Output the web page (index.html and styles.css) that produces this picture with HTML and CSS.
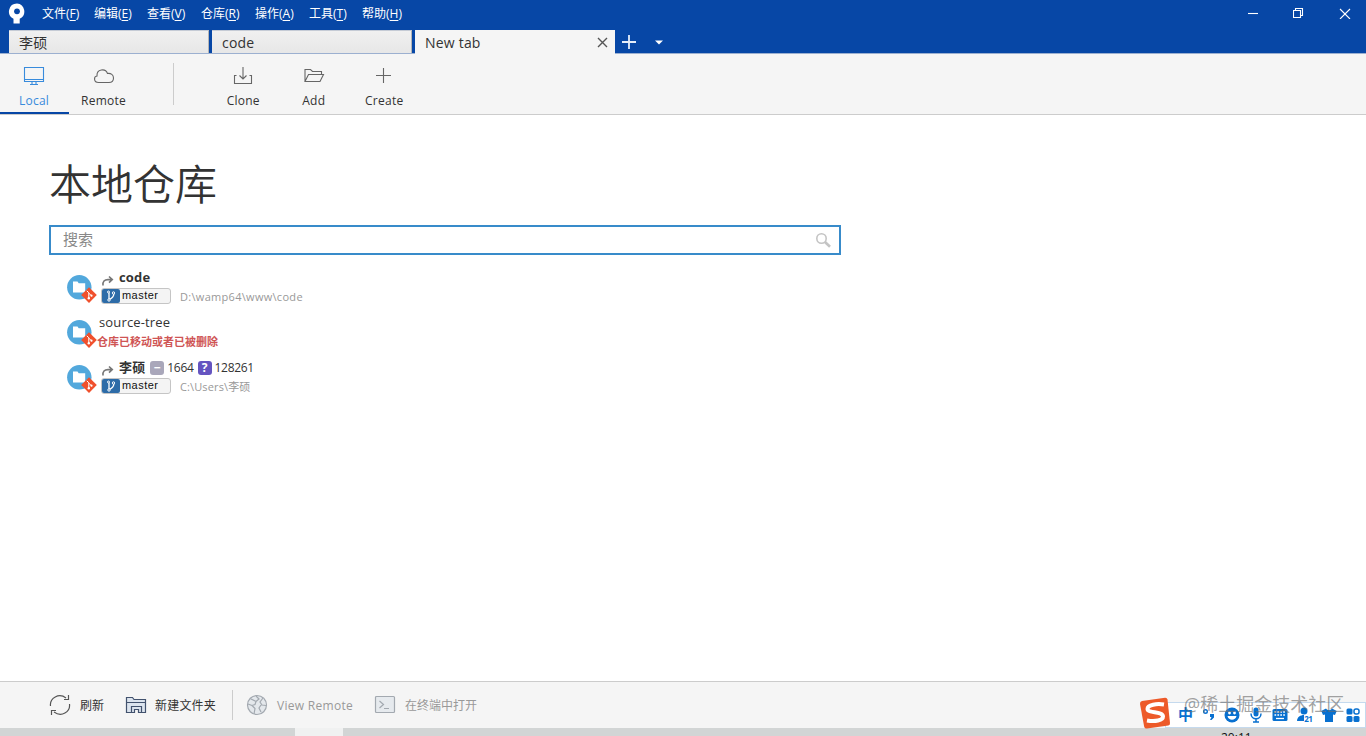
FILE: index.html
```html
<!DOCTYPE html>
<html lang="zh-CN">
<head>
<meta charset="utf-8">
<title>SourceTree</title>
<link rel="stylesheet" href="styles.css">
</head>
<body>
<svg class="defs" width="0" height="0">
  <defs>
    <symbol id="repo" viewBox="0 0 31 28">
      <circle cx="12.3" cy="12.3" r="12.2" fill="#52a8dc"/>
      <path d="M6 6.5h4.5l1.2 1.8h6.5v9.2H6z" fill="#fff"/>
      <path d="M22 12.300l7.800 7.800-7.800 7.800-7.800-7.800z" fill="#f0502c"/>
      <path d="M19.800 15.800l2 2v6M21.800 18.200l2.700 2.600" stroke="#fff" fill="none"/>
      <circle cx="21.800" cy="23.300" r="1.200" fill="#fff"/><circle cx="24.500" cy="20.700" r="1.100" fill="#fff"/>
    </symbol>
    <symbol id="arrow" viewBox="0 0 13 12">
      <path d="M2 10.500C1.500 6.500 3.500 4.600 7 4.600h4M8 1.500l3.300 3.100L8 7.700" fill="none" stroke="#777" stroke-width="1.600"/>
    </symbol>
    <symbol id="branch" viewBox="0 0 18 14">
      <path d="M7 3.500v7M11.800 5c0 3-1.300 4-4.800 5.700" fill="none" stroke="#fff" stroke-width="1.300"/>
      <g fill="#2d6ca8" stroke="#fff"><circle cx="6.500" cy="3" r="1"/><circle cx="11.500" cy="4" r="1.200"/><circle cx="7" cy="11" r="1.200"/></g>
    </symbol>
  </defs>
</svg>
<header class="titlebar">
  <div class="menubar">
    <svg class="logo" width="18" height="22" viewBox="0 0 18 22"><path d="M9 .5a8 8 0 0 0-3.500 15.200V20.500h6.200v-4.800A8 8 0 0 0 9 .5z" fill="#fff"/><circle cx="9" cy="8.300" r="2.900" fill="#0747a6"/></svg>
    <nav class="menu">
      <span>文件(<u>F</u>)</span><span>编辑(<u>E</u>)</span><span>查看(<u>V</u>)</span><span>仓库(<u>R</u>)</span><span>操作(<u>A</u>)</span><span>工具(<u>T</u>)</span><span>帮助(<u>H</u>)</span>
    </nav>
    <div class="window-buttons">
      <svg width="12" height="12" viewBox="0 0 12 12"><path d="M1 6.500h10"/></svg>
      <svg width="12" height="12" viewBox="0 0 12 12"><path d="M.5 3.500h7v7h-7zM2.500 3.500v-2h7v7h-2"/></svg>
      <svg width="12" height="12" viewBox="0 0 12 12"><path d="M1 2l10 10M11 2l-10 10"/></svg>
    </div>
  </div>
  <div class="tabs">
    <div class="tab">李硕</div>
    <div class="tab">code</div>
    <div class="tab active">New tab<svg width="11" height="11" viewBox="0 0 11 11"><path d="M1 1l9 9M10 1l-9 9" stroke="#555" stroke-width="1.400"/></svg></div>
    <svg class="plus" width="14" height="14" viewBox="0 0 14 14"><path d="M7 0v14M0 7h14" stroke="#e6eefa" stroke-width="1.800"/></svg>
    <svg class="caret" width="8" height="5" viewBox="0 0 8 5"><path d="M0 .5h8L4 4.500z" fill="#fff"/></svg>
  </div>
</header>
<div class="toolbar">
  <div class="tool selected"><svg width="22" height="20" viewBox="0 0 22 20"><path d="M1.500 1.500h19v14h-19zM2 13.500h18M9 16v2M13 16v2M7 18.500h8"/></svg>Local</div>
  <div class="tool remote"><svg width="22" height="20" viewBox="0 0 22 20"><path d="M5.500 16.500C.5 16.500.5 10.500 4 10c-.5-7 8.500-8 10.500-2.500C18 7 20.500 9 20.500 12c0 3-2 4.500-4.500 4.500z"/></svg>Remote</div>
  <div class="separator"></div>
  <div class="tool"><svg width="22" height="20" viewBox="0 0 22 20"><path d="M4.500 9.500h-2v8h17v-8h-2M11 1v12M7.500 9.500L11 13l3.500-3.500"/></svg>Clone</div>
  <div class="tool"><svg width="22" height="20" viewBox="0 0 22 20"><path d="M2 15.500V3.500h5.500l2 2h9v3M2 15.500h15l3.500-7h-15z"/></svg>Add</div>
  <div class="tool"><svg width="22" height="20" viewBox="0 0 22 20"><path d="M10.500 2v15M3 9.500h15"/></svg>Create</div>
</div>
<main class="content">
  <h1>本地仓库</h1>
  <div class="search"><span>搜索</span><svg width="16" height="16" viewBox="0 0 16 16"><circle cx="6.500" cy="6.500" r="4.700" fill="none" stroke="#c4c4c4" stroke-width="1.600"/><path d="M10 10l5 4.800" stroke="#c4c4c4" stroke-width="2.600"/></svg></div>
  <div class="repos">
    <div class="repo">
      <svg class="repo-icon"><use href="#repo"/></svg>
      <div class="details">
        <div class="name"><svg class="arrow"><use href="#arrow"/></svg><b>code</b></div>
        <div class="info"><span class="badge"><svg><use href="#branch"/></svg>master</span><span class="path">D:\wamp64\www\code</span></div>
      </div>
    </div>
    <div class="repo">
      <svg class="repo-icon"><use href="#repo"/></svg>
      <div class="details missing">
        <div class="name">source-tree</div>
        <div class="error">仓库已移动或者已被删除</div>
      </div>
    </div>
    <div class="repo">
      <svg class="repo-icon"><use href="#repo"/></svg>
      <div class="details">
        <div class="name"><svg class="arrow"><use href="#arrow"/></svg><b class="cjk-name">李硕</b><i class="mark removed">−</i><span class="count">1664</span><i class="mark unknown">?</i><span class="count">128261</span></div>
        <div class="info"><span class="badge"><svg><use href="#branch"/></svg>master</span><span class="path tight">C:\Users\李硕</span></div>
      </div>
    </div>
  </div>
</main>
<footer class="actions">
  <svg width="22" height="22" viewBox="0 0 22 22" fill="none" stroke="#555" stroke-width="1.200"><path d="M1.500 12C.5 4 10-1.500 17 4M19.500 1v4.500H15M20.500 10c1 8-8 13.500-15.500 8M2.500 21v-4.500H7"/></svg>
  <span class="a-refresh">刷新</span>
  <svg width="22" height="20" viewBox="0 0 22 20" fill="#dce4ee" stroke="#42526e" stroke-width="1.200"><path d="M1.500 17.500v-15h6l1.500 2h11.500v13h-4v-6h-10v6zM1.500 7.500h19M6.500 17.500v-6h10v6h-3v-3h-4v3z"/></svg>
  <span class="a-folder">新建文件夹</span>
  <div class="divider"></div>
  <svg width="22" height="22" viewBox="0 0 22 22" fill="#e4e8ec" stroke="#a3a9b0" stroke-width="1.200"><circle cx="11" cy="11" r="9.500"/><path d="M4 4.500l6 3-1 3-3 1 3 3-1 5.500M10 2l3 3-3 2.500M17 4l-3 4 2 3 4 .5M15 11l-2 3 2 4M2 10l4 1.500"/></svg>
  <span class="a-remote">View Remote</span>
  <svg width="22" height="20" viewBox="0 0 22 20" fill="#e6eaee" stroke="#a3a9b0" stroke-width="1.200"><rect x="1.500" y="1.500" width="19" height="16" rx="1"/><path d="M5.500 6l4 3.500-4 3.500M10 13.500h5" fill="none"/></svg>
  <span class="a-terminal">在终端中打开</span>
</footer>
<div class="taskbar"><div class="task"></div><span class="clock">20:11</span></div>
<div class="ime">
  <span class="zh">中</span>
  <svg width="14" height="16" viewBox="0 0 14 16"><circle cx="3.500" cy="4.500" r="1.800" fill="none" stroke="#0870d0" stroke-width="1.400"/><path d="M8 7h4v3.500L9.500 13H8l1.500-3H8z"/></svg>
  <svg width="16" height="16" viewBox="0 0 16 16"><circle cx="8" cy="8" r="7.500"/><circle cx="5.500" cy="6" r="1.400" fill="#fff"/><circle cx="10.500" cy="6" r="1.400" fill="#fff"/><path d="M3.500 9h9c-1 5-8 5-9 0z" fill="#fff"/></svg>
  <svg width="14" height="16" viewBox="0 0 14 16"><rect x="4.500" y=".5" width="5" height="9" rx="2.500"/><path d="M2 6.500c0 7 10 7 10 0M7 12v3M4 15h6" fill="none" stroke="#0870d0" stroke-width="1.500"/></svg>
  <svg width="16" height="16" viewBox="0 0 16 16"><rect x=".5" y="2" width="15" height="12" rx="1.500"/><path d="M2.500 5h11M2.500 8h11" stroke="#fff" stroke-width="1.500" stroke-dasharray="1.700 1.200"/><path d="M4 11.500h8" stroke="#fff" stroke-width="1.300"/></svg>
  <svg width="16" height="16" viewBox="0 0 16 16"><circle cx="7" cy="4" r="3.500"/><path d="M0 14c0-8 14-8 14 0z"/><path d="M7 8h9v7H7z" fill="#fff"/><text x="7.300" y="14.500" font-size="8" font-weight="700" textLength="8.500">21</text></svg>
  <svg width="16" height="16" viewBox="0 0 16 16"><path d="M5 1.500c1.500 2 4.500 2 6 0l4.700 2.500-1.700 4-2-.6V15H4V7.400L2 8 .3 4z"/></svg>
  <svg width="14" height="16" viewBox="0 0 14 16"><rect x=".5" y="1.500" width="6" height="6" rx="1.500"/><rect x="8" y="2" width="5" height="5" rx="2" fill="none" stroke="#0870d0" stroke-width="1.500"/><rect x=".5" y="9" width="6" height="6" rx="1.500"/><rect x="7.500" y="9" width="6" height="6" rx="1.500"/></svg>
</div>
<svg class="sogou" width="32" height="32" viewBox="0 0 32 32"><path d="M3 4L26 .7q2-.2 2.500 1.800L31 26q.2 2-1.700 2.500L8 31.500q-2.200.3-2.800-1.800L1 7q-.3-2.500 2-3z" fill="#ed5a29"/><path d="M25 7.500C18 6.500 8.500 7.500 8.500 12c0 4.500 15.500 2 15.500 7.500 0 4-8 5.500-16 4" fill="none" stroke="#fff" stroke-width="4"/></svg>
<div class="watermark">@稀土掘金技术社区</div>
</body>
</html>
```
FILE: styles.css
```css
* { box-sizing: border-box; }
body {
  margin: 0;
  width: 1366px;
  height: 736px;
  overflow: hidden;
  position: relative;
  display: flex;
  flex-direction: column;
  background: #fff;
  color: #333;
  font-family: "Open Sans", "Noto Sans CJK SC", sans-serif;
  font-size: 12px;
}
svg { flex: none; display: block; }
.defs { position: absolute; }
.titlebar { height: 54px; background: #0747a6; border-bottom: 1px solid #9cb0d0; flex: none; }
.menubar { height: 30px; display: flex; padding-left: 8px; color: #fff; }
.logo { margin-top: 3px; }
.menu { display: grid; grid-template-columns: 52px 53px 54px 54px 54px 53px 50px; margin-left: 16px; line-height: 28px; }
.menu span { white-space: nowrap; }
.menu u { text-underline-offset: 2px; }
.window-buttons { margin-left: auto; display: flex; gap: 34px; padding: 7px 15px 0 0; }
.window-buttons path { fill: none; stroke: #fff; stroke-width: 1.1; }
.tabs { display: flex; height: 24px; padding-left: 9px; }
.tab {
  width: 200px;
  height: 23px;
  margin-right: 3px;
  padding: 0 7px 0 10px;
  display: flex;
  align-items: center;
  justify-content: space-between;
  background: linear-gradient(#f0f0f0, #e7e7e7);
  border-right: 1px solid #b5b5b5;
  border-top: 1px solid #c5cbd5;
  font-size: 14px;
  letter-spacing: .2px;
}
.tab.active { background: #f5f5f5; height: 24px; margin-right: 7px; border: 0; }
.plus { margin-top: 5px; }
.caret { margin: 10px 0 0 19px; }
.toolbar { height: 61px; flex: none; display: flex; background: #f5f5f5; border-bottom: 1px solid #ccc; }
.tool { width: 70.5px; padding-top: 12px; display: flex; flex-direction: column; align-items: center; line-height: 16px; gap: 7px; font-size: 12px; letter-spacing: .25px; }
.tool svg { fill: none; stroke: #666; stroke-width: 1.1; }
.tool.selected { width: 69px; padding-right: 1px; color: #388bdc; border-bottom: 2px solid #0747a6; }
.tool.selected svg { stroke: #388bdc; }
.tool.remote { width: 69px; }
.separator { width: 1px; height: 42px; margin: 9px 34px 0 35px; background: #ccc; }
.content { flex: 1; padding-left: 49px; }
h1 { margin: 35px 0 0; height: 75px; line-height: 64px; font-size: 42px; font-weight: 350; font-family: "Noto Sans CJK SC", sans-serif; }
.search { width: 792px; height: 30px; border: 2px solid #388bca; display: flex; justify-content: space-between; align-items: center; padding: 0 8px 0 12px; color: #888; font-size: 15px; line-height: 20px; }
.search span { margin-top: -2px; }
.repos { padding: 13px 0 0 18px; }
.repo { display: flex; height: 45px; }
.repo-icon { width: 31px; height: 28px; margin-top: 7px; }
.details { margin-left: 3px; }
.missing { margin-left: -1px; }
.missing .name { margin-left: 2px; letter-spacing: .15px; }
.name { height: 20px; display: flex; align-items: center; font-size: 13px; line-height: 18px; padding-bottom: 2px; }
.name b { letter-spacing: .15px; }
.arrow { width: 13px; height: 12px; margin: 7px 5px 0 0; }
.mark { width: 14px; height: 14px; margin: 1px 3px 0 5px; border-radius: 3px; color: #fff; background: #a9a7ba; font: 700 12px/14px "Open Sans", sans-serif; text-align: center; }
.unknown { background: #6554c0; margin-left: 4px; }
.count { font-size: 12px; letter-spacing: -.3px; margin-top: 2px; }
.info { display: flex; height: 20px; }
.badge { width: 70px; height: 16px; display: flex; border: 1px solid #c5c5c5; border-radius: 3px; background: #f4f4f4; font: 11px/13px "Liberation Sans", sans-serif; letter-spacing: .45px; color: #111; }
.badge svg { width: 18px; height: 14px; border-radius: 2px; background: #2d6ca8; margin-right: 2px; }
.path { margin-left: 9px; color: #999; font-size: 11px; line-height: 18px; letter-spacing: .3px; }
.tight { letter-spacing: .12px; }
.error { color: #cf5555; font-weight: 700; font-size: 11px; line-height: 18px; }
.actions { height: 47px; flex: none; display: flex; align-items: center; padding-left: 49px; border-top: 1px solid #ccc; background: #f5f5f5; }
.actions span { white-space: nowrap; }
.a-refresh { margin-left: 9px; width: 45px; }
.a-folder { margin-left: 8px; width: 77px; letter-spacing: .2px; }
.divider { width: 1px; height: 30px; margin-right: 13px; background: #ccc; }
.a-remote { margin-left: 9px; width: 97px; color: #999; letter-spacing: .3px; }
.a-terminal { margin-left: 9px; color: #999; }
.taskbar { height: 8px; flex: none; display: flex; background: #d2d5d5; overflow: hidden; }
.task { width: 48px; margin-left: 295px; background: #f0f1f1; }
.clock { margin-left: 878px; line-height: 20px; color: #111; }
.ime { position: absolute; left: 1165px; top: 702px; width: 201px; height: 26px; background: #fff; border: 1px solid #c5daee; display: flex; align-items: center; justify-content: space-between; padding: 0 5px 0 12px; color: #0870d0; fill: #0870d0; }
.zh { font-size: 15px; font-weight: 700; line-height: 20px; margin-top: -2px; }
.sogou { position: absolute; left: 1139px; top: 697px; }
.watermark { position: absolute; left: 1184px; top: 691px; font-size: 18px; line-height: 26px; color: rgba(110, 110, 110, .65); white-space: nowrap; font-weight: 400; }
```
